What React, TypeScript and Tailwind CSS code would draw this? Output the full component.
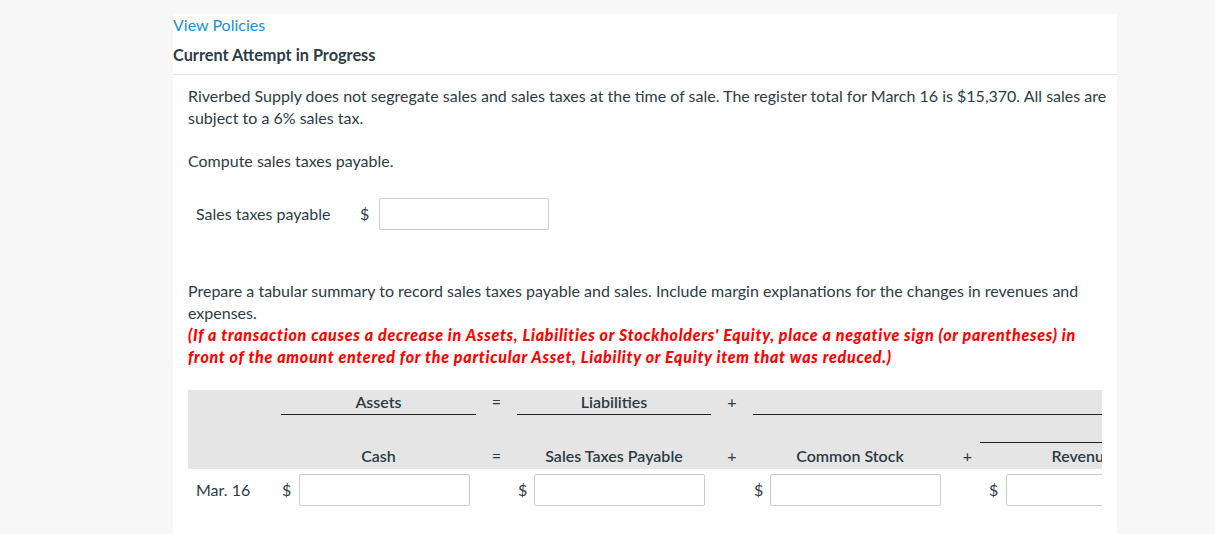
import React from "react";

const font = { fontFamily: "Lato, 'Noto Sans', Arial, sans-serif" };

function Cell({ w, dollarW = 18 }: { w: number; dollarW?: number }) {
  return (
    <div className="flex shrink-0 items-start" style={{ width: w }}>
      <span className="shrink-0 leading-[32px] pl-[1px]" style={{ width: dollarW }}>$</span>
      <div className="w-[171px] h-[32px] shrink-0 border border-[#c7cdd1] rounded-[2px] bg-white" />
    </div>
  );
}

export default function App() {
  return (
    <div style={font} className="min-h-[534px] bg-[#f7f7f7] pt-[14px] text-[16px] text-[#2d3b45]">
      <div className="ml-[173px] w-[944px] bg-white min-h-[520px] overflow-hidden">
        <div className="leading-[22px] text-[#1a8de0]">View Policies</div>
        <div className="mt-[8px] leading-[22px] font-bold text-[16.3px]">Current Attempt in Progress</div>
        <div className="mt-[8px] h-px bg-[#e6e6e6]" />
        <div className="pl-[15px]">
          <p className="mt-[10px] leading-[22px]">
            Riverbed Supply does not segregate sales and sales taxes at the time of sale. The register total for March 16 is $15,370. All sales are subject to a 6% sales tax.
          </p>
          <p className="mt-[21px] leading-[22px]">Compute sales taxes payable.</p>
          <div className="mt-[26px] flex items-center h-[32px]">
            <span className="pl-[8px] w-[172px]">Sales taxes payable</span>
            <span className="w-[19px]">$</span>
            <div className="w-[170px] h-[32px] border border-[#c7cdd1] rounded-[2px]" />
          </div>
          <p className="mt-[50px] leading-[22px] pr-[34px]">
            Prepare a tabular summary to record sales taxes payable and sales. Include margin explanations for the changes in revenues and expenses.
          </p>
          <p className="leading-[22px] font-black italic text-[#ff0000] tracking-[0.72px] pr-[20px]">
            (If a transaction causes a decrease in Assets, Liabilities or Stockholders' Equity, place a negative sign (or parentheses) in front of the amount entered for the particular Asset, Liability or Equity item that was reduced.)
          </p>

          <div className="mt-[22px] w-[914px] overflow-hidden">
            {/* header */}
            <div className="bg-[#e5e5e5] h-[79px] flex flex-col w-[914px] overflow-hidden">
              <div className="flex h-[25px] w-[1600px] shrink-0">
                <div className="w-[93px] shrink-0" />
                <div className="w-[195px] shrink-0 flex flex-col">
                  <div className="pt-[2px] leading-[20px] font-semibold text-center">Assets</div>
                  <div className="mt-[2px] h-px bg-[#222]" />
                </div>
                <div className="w-[41px] shrink-0 pt-[2px] leading-[20px] text-center">=</div>
                <div className="w-[194px] shrink-0 flex flex-col">
                  <div className="pt-[2px] leading-[20px] font-semibold text-center">Liabilities</div>
                  <div className="mt-[2px] h-px bg-[#222]" />
                </div>
                <div className="w-[42px] shrink-0 pt-[2px] leading-[20px] text-center">+</div>
                <div className="w-[700px] shrink-0 flex flex-col">
                  <div className="h-[22px]" />
                  <div className="mt-[2px] h-px bg-[#222]" />
                </div>
              </div>
              <div className="flex h-[54px] w-[1600px] shrink-0">
                <div className="w-[93px] shrink-0" />
                <div className="w-[195px] shrink-0 flex items-end pb-[3px] justify-center leading-[20px] font-semibold">Cash</div>
                <div className="w-[41px] shrink-0 flex items-end pb-[3px] justify-center leading-[20px]">=</div>
                <div className="w-[194px] shrink-0 flex items-end pb-[3px] justify-center leading-[20px] font-semibold">Sales Taxes Payable</div>
                <div className="w-[42px] shrink-0 flex items-end pb-[3px] justify-center leading-[20px]">+</div>
                <div className="w-[194px] shrink-0 flex items-end pb-[3px] justify-center leading-[20px] font-semibold">Common Stock</div>
                <div className="w-[41px] shrink-0 flex items-end pb-[3px] justify-center leading-[20px]">+</div>
                <div className="w-[500px] shrink-0 flex flex-col ml-[-8px]">
                  <div className="mt-[27px] h-px bg-[#222]" />
                  <div className="flex pl-[8px] mt-[3px]">
                    <div className="w-[195px] shrink-0 leading-[20px] font-semibold text-center">Revenues</div>
                  </div>
                </div>
              </div>
            </div>
            {/* data row */}
            <div className="flex pt-[5px] h-[45px] w-[914px] overflow-hidden">
              <div className="w-[93px] shrink-0 pl-[8px] leading-[32px]">Mar. 16</div>
              <Cell w={195} dollarW={18} />
              <div className="w-[41px] shrink-0" />
              <Cell w={194} dollarW={17} />
              <div className="w-[42px] shrink-0" />
              <Cell w={194} dollarW={17} />
              <div className="w-[41px] shrink-0" />
              <Cell w={195} dollarW={18} />
            </div>
          </div>
        </div>
      </div>
    </div>
  );
}
